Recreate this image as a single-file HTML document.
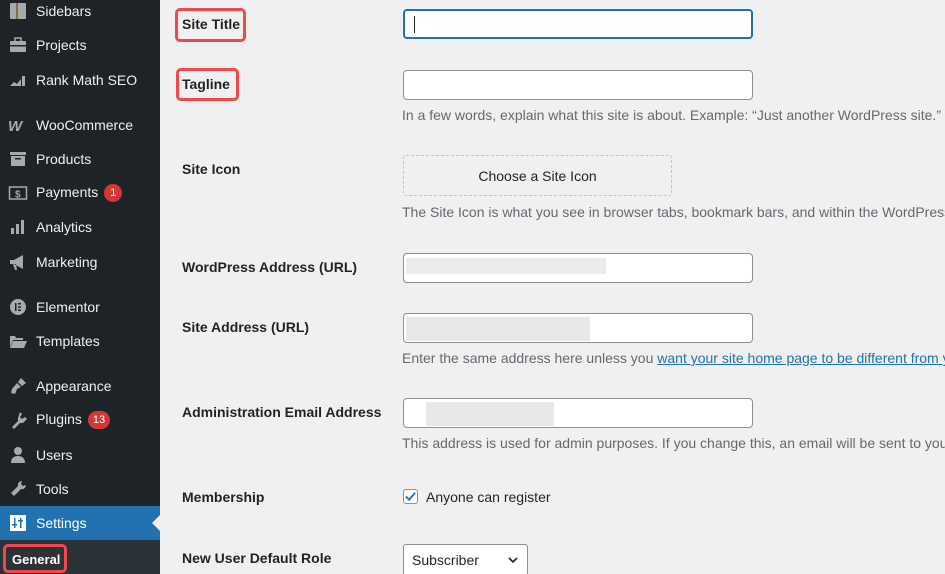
<!DOCTYPE html>
<html><head><style>
*{margin:0;padding:0;box-sizing:border-box}
html,body{width:945px;height:574px;overflow:hidden}
body{background:#f0f0f1;font-family:"Liberation Sans",sans-serif;font-size:14px;color:#1d2327;position:relative}
#wrap{position:absolute;left:0;top:0;width:945px;height:574px;overflow:hidden}
#sb{position:absolute;left:0;top:0;width:160px;height:574px;background:#1d2327}
.mi{position:absolute;left:0;width:160px;height:34px;color:#f0f0f1;font-size:14px}
.mi span.t{position:absolute;left:36px;top:50%;transform:translateY(-50%);white-space:nowrap}
.ic{position:absolute;left:8px;top:50%;transform:translateY(-50%);width:20px;height:20px}
.badge{display:inline-block;background:#d63638;color:#fff;border-radius:9px;font-size:11px;min-width:18px;height:18px;line-height:18px;text-align:center;padding:0 5px;margin-left:6px;vertical-align:1px}
.lab{position:absolute;left:182px;font-weight:bold;font-size:14px;color:#1d2327;transform:translateY(-50%);white-space:nowrap}
.inp{position:absolute;left:403px;width:350px;height:30px;background:#fff;border:1px solid #8c8f94;border-radius:4px}
.desc{position:absolute;left:402px;color:#646970;font-size:14px;white-space:nowrap;transform:translateY(-50%)}
.red{position:absolute;border:3px solid #f0484d;border-radius:5px}
.blur{position:absolute;background:#e8e8e8}
</style></head><body><div id="wrap">
<div id="sb">
<div class="mi" style="top:-6px"><svg class="ic" viewBox="0 0 20 20"><rect x="2" y="2" width="16" height="16" rx="1" fill="#a7aaad"/><rect x="8" y="2" width="2" height="16" fill="#8a6d3b"/></svg><span class="t">Sidebars</span></div>
<div class="mi" style="top:28px"><svg class="ic" viewBox="0 0 20 20"><rect x="2" y="6" width="16" height="11" rx="1" fill="#a7aaad"/><rect x="7" y="3" width="6" height="4" fill="none" stroke="#a7aaad" stroke-width="1.5"/><rect x="2" y="10" width="16" height="1.5" fill="#1d2327"/></svg><span class="t">Projects</span></div>
<div class="mi" style="top:63px"><svg class="ic" viewBox="0 0 20 20"><path d="M2 16l4-4 3 2 4-5v7H2z M14 6h3v10h-3z" fill="#a7aaad"/></svg><span class="t">Rank Math SEO</span></div>
<div class="mi" style="top:108px"><svg class="ic" viewBox="0 0 20 20"><text x="0" y="16" font-size="15" font-weight="bold" font-style="italic" fill="#a7aaad" font-family="Liberation Sans">W</text></svg><span class="t">WooCommerce</span></div>
<div class="mi" style="top:142px"><svg class="ic" viewBox="0 0 20 20"><rect x="2" y="3" width="16" height="3" fill="#a7aaad"/><rect x="3" y="7" width="14" height="10" fill="#a7aaad"/><rect x="7" y="9" width="6" height="1.5" fill="#1d2327"/></svg><span class="t">Products</span></div>
<div class="mi" style="top:176px"><svg class="ic" viewBox="0 0 20 20"><rect x="1.5" y="4" width="17" height="12" fill="none" stroke="#a7aaad" stroke-width="1.5"/><text x="7" y="14.5" font-size="10" font-weight="bold" fill="#a7aaad">$</text></svg><span class="t">Payments<span class="badge">1</span></span></div>
<div class="mi" style="top:210px"><svg class="ic" viewBox="0 0 20 20"><rect x="3" y="11" width="3" height="6" fill="#a7aaad"/><rect x="8" y="7" width="3" height="10" fill="#a7aaad"/><rect x="13" y="3" width="3" height="14" fill="#a7aaad"/></svg><span class="t">Analytics</span></div>
<div class="mi" style="top:245px"><svg class="ic" viewBox="0 0 20 20"><path d="M2 8h4l9-5v14l-9-5H2z M5 12l2 6h2l-1-6z" fill="#a7aaad"/></svg><span class="t">Marketing</span></div>
<div class="mi" style="top:290px"><svg class="ic" viewBox="0 0 20 20"><circle cx="10" cy="10" r="8" fill="#a7aaad"/><rect x="7" y="6" width="1.5" height="8" fill="#1d2327"/><rect x="10" y="6" width="3" height="1.5" fill="#1d2327"/><rect x="10" y="9.3" width="3" height="1.5" fill="#1d2327"/><rect x="10" y="12.5" width="3" height="1.5" fill="#1d2327"/></svg><span class="t">Elementor</span></div>
<div class="mi" style="top:324px"><svg class="ic" viewBox="0 0 20 20"><path d="M2 5h5l1 2h7v2H5l-3 7z M5 10h14l-3 7H2z" fill="#a7aaad"/></svg><span class="t">Templates</span></div>
<div class="mi" style="top:369px"><svg class="ic" viewBox="0 0 20 20"><path d="M13 2l5 5-4 3-4-4z M9 7l4 4-4 2-2 5-4-1 1-4z" fill="#a7aaad"/></svg><span class="t">Appearance</span></div>
<div class="mi" style="top:403px"><svg class="ic" viewBox="0 0 20 20"><path d="M12 2l2 2-2 3 2 2 3-2 2 2-4 4-3 0-6 6-2-2 6-6 0-3z" fill="#a7aaad"/></svg><span class="t">Plugins<span class="badge">13</span></span></div>
<div class="mi" style="top:438px"><svg class="ic" viewBox="0 0 20 20"><circle cx="10" cy="6" r="4" fill="#a7aaad"/><path d="M3 18c0-5 3-7 7-7s7 2 7 7z" fill="#a7aaad"/></svg><span class="t">Users</span></div>
<div class="mi" style="top:472px"><svg class="ic" viewBox="0 0 20 20"><path d="M14 2a4 4 0 0 0-4 5L3 14l3 3 7-7a4 4 0 0 0 5-4l-3 1-2-2z" fill="#a7aaad"/></svg><span class="t">Tools</span></div>
<div class="mi" style="top:506px;background:#2271b1;color:#fff"><svg class="ic" viewBox="0 0 20 20"><rect x="2" y="2" width="16" height="16" fill="#fff"/><rect x="6" y="5" width="1.5" height="10" fill="#2271b1"/><rect x="12" y="5" width="1.5" height="10" fill="#2271b1"/><rect x="4" y="11" width="5" height="1.5" fill="#2271b1"/><rect x="10" y="7" width="5" height="1.5" fill="#2271b1"/></svg><span class="t">Settings</span>
<div style="position:absolute;right:0;top:9px;width:0;height:0;border-top:8px solid transparent;border-bottom:8px solid transparent;border-right:8px solid #f0f0f1"></div></div>
<div style="position:absolute;top:540px;left:0;width:160px;height:34px;background:#2c3338"></div>
<div style="position:absolute;left:12px;top:552px;color:#fff;font-weight:bold;font-size:13px">General</div>
<div class="red" style="left:3px;top:544px;width:64px;height:29px"></div>
</div>

<div class="lab" style="top:24px">Site Title</div>
<div class="red" style="left:175px;top:8px;width:71px;height:34px"></div>
<div class="inp" style="top:9px;border:2px solid #2271b1"><div style="position:absolute;left:9px;top:5px;width:1px;height:17px;background:#1d2327"></div></div>

<div class="lab" style="top:84px">Tagline</div>
<div class="red" style="left:176px;top:68px;width:63px;height:33px"></div>
<div class="inp" style="top:70px"></div>
<div class="desc" style="top:115px">In a few words, explain what this site is about. Example: “Just another WordPress site.”</div>

<div class="lab" style="top:169px">Site Icon</div>
<div style="position:absolute;left:403px;top:155px;width:269px;height:41px;border:1px dashed #c3c4c7;border-radius:3px;text-align:center;line-height:40px;color:#1d2327">Choose a Site Icon</div>
<div class="desc" style="top:212px">The Site Icon is what you see in browser tabs, bookmark bars, and within the WordPress mobile apps.</div>

<div class="lab" style="top:267px">WordPress Address (URL)</div>
<div class="inp" style="top:253px"><div class="blur" style="left:2px;top:4px;width:200px;height:16px;background:#ececec"></div></div>

<div class="lab" style="top:327px">Site Address (URL)</div>
<div class="inp" style="top:313px"><div class="blur" style="left:2px;top:3px;width:184px;height:24px"></div></div>
<div class="desc" style="top:358px">Enter the same address here unless you <span style="color:#2271b1;text-decoration:underline">want your site home page to be different from your installation directory.</span></div>

<div class="lab" style="top:412px">Administration Email Address</div>
<div class="inp" style="top:398px"><div class="blur" style="left:22px;top:3px;width:128px;height:24px"></div></div>
<div class="desc" style="top:443px">This address is used for admin purposes. If you change this, an email will be sent to your new address to confirm it.</div>

<div class="lab" style="top:497px">Membership</div>
<div style="position:absolute;left:403px;top:489px;width:15px;height:15px;border:1px solid #8c8f94;border-radius:3px;background:#fff"><svg viewBox="0 0 16 16" width="15" height="15" style="position:absolute;left:-1px;top:-1px"><path d="M3 8l3.5 3.5L13 4" fill="none" stroke="#2271b1" stroke-width="2"/></svg></div>
<div style="position:absolute;left:426px;top:489px;color:#1d2327">Anyone can register</div>

<div class="lab" style="top:558px">New User Default Role</div>
<div style="position:absolute;left:403px;top:544px;width:125px;height:32px;border:1px solid #8c8f94;border-radius:3px;background:#fff;padding-left:8px;line-height:30px">Subscriber<svg viewBox="0 0 12 12" width="12" height="12" style="position:absolute;right:8px;top:9px"><path d="M2 4l4 4 4-4" fill="none" stroke="#1d2327" stroke-width="1.6"/></svg></div>
</div></body></html>
